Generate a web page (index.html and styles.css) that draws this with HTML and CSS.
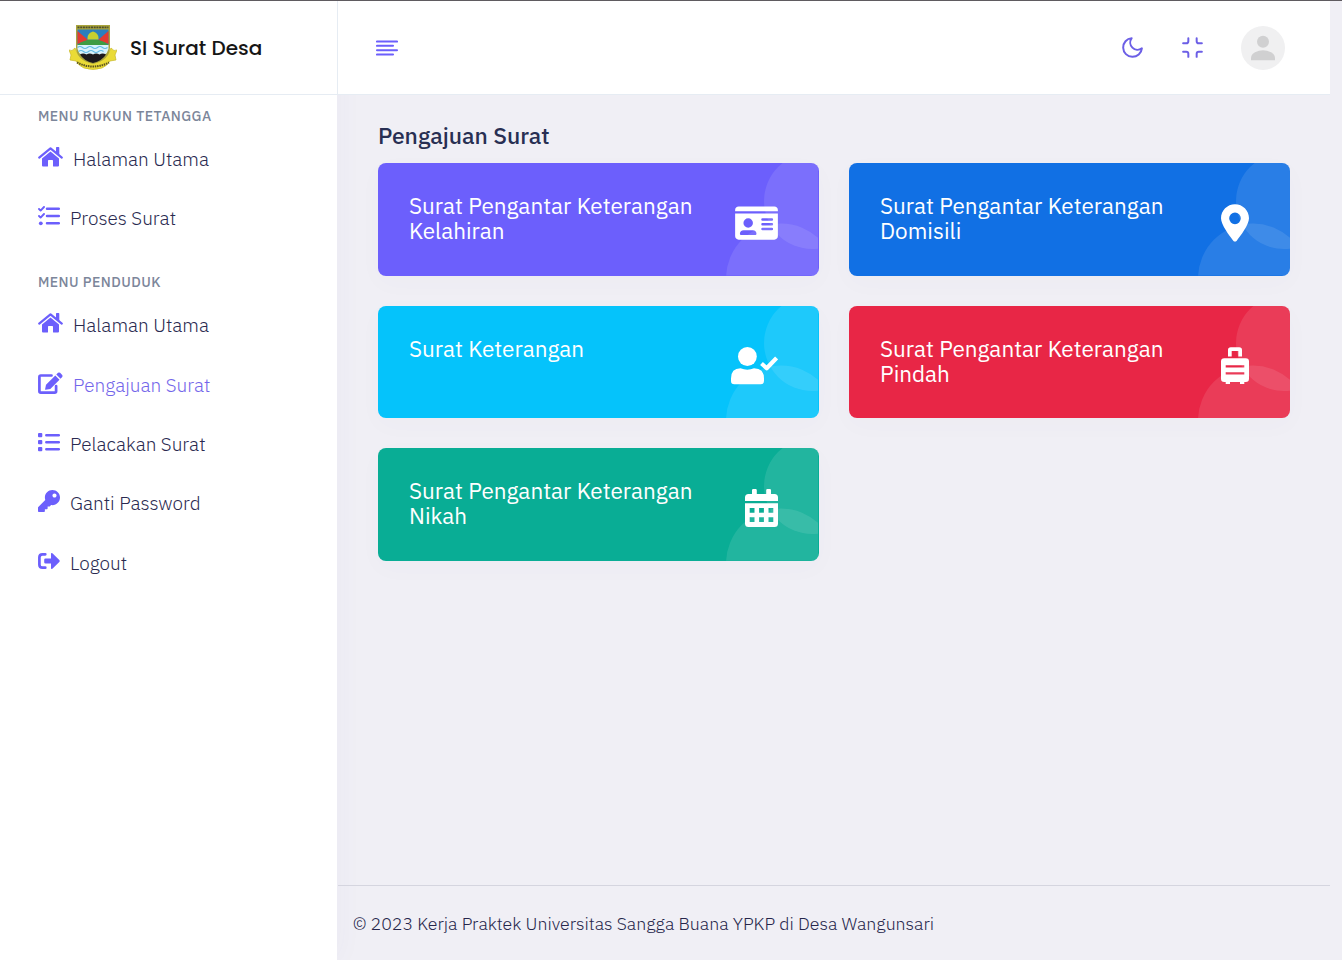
FILE: index.html
```html
<!DOCTYPE html>
<html lang="id">
<head>
<meta charset="utf-8">
<title>SI Surat Desa</title>
<link rel="stylesheet" href="styles.css">
</head>
<body>
<svg class="defs" width="0" height="0">
  <defs>
    <symbol id="house" viewBox="0 0 25 20"><path d="M1.2 10.6 12.5 1.3 23.8 10.6" fill="none" stroke="currentColor" stroke-width="2.2" stroke-linecap="round" stroke-linejoin="round"/><path d="M18 .7q0-.7.7-.7h1.9q.7 0 .7.7V8L18 5.2zM12.5 4.6 21 11.6V18.6q0 1-1 1h-4.300q-.7 0-.7-.7V13.800q0-.7-.7-.7h-3.600q-.7 0-.7.7V18.900q0 .7-.7.7H5q-1 0-1-1V11.600z"/></symbol>
    <symbol id="glow" viewBox="0 0 93 113"><circle cx="86" cy="38" r="48"/><circle cx="55" cy="115.500" r="55"/></symbol>
  </defs>
</svg>
<div class="app">
  <aside class="sidebar">
    <div class="brand">
      <svg class="crest" viewBox="0 0 48 46">
        <path d="M0 25q3 2 6-2l4 8q14 9 28 0l4-8q3 4 6 2l-2 5 1 5-6 1q-3 5-8 7-9 3-18 0-5-2-8-7l-6-1 1-5z" fill="#eadb36" stroke="#c9b92a" stroke-width=".7"/>
        <path d="M7 0H41V22q0 13-17 17Q7 35 7 22z" fill="#a9a43c"/>
        <path d="M8.500 4.500H39.500V20H8.500z" fill="#2c7fbd"/>
        <path d="M8.500 6 19 15 8.500 19zM39.500 6 29 15l10.500 4z" fill="#e23b32"/>
        <path d="M8.500 20q6-5.500 15.500-5.500t15.500 5.500z" fill="#3f9b43"/>
        <path d="M18.500 13q0-5 5.500-6.500 5.500 1.500 5.500 6.500v1.500h-11z" fill="#c8d030"/>
        <path d="M8.500 20h31v4q-1 4-4 6h-23q-3-2-4-6z" fill="#d9f2fb"/>
        <path d="M8.500 22.500q2.500-2 5 0t5 0 5 0 5 0 5 0 5 0M9.500 26.500q2.500-2 5 0t5 0 5 0 5 0 5 0" fill="none" stroke="#62bbe6" stroke-width="1.200"/>
        <path d="M11 29.500q3-2 6.500 0 3-2 6.500 0 3-2 6.500 0 3-2 6.500 0-4 6.500-13 8.500-9-2-13-8.500z" fill="#1d1a1d"/>
        <path d="M8.500 2.400h31" stroke="#4f4f2c" stroke-width="1.800" stroke-dasharray="2 .7"/>
        <path d="M8 37.500q16 8 32 0" fill="none" stroke="#5c5420" stroke-width="2" stroke-dasharray="1.500 .8"/>
      </svg>
      <span class="brand-name">SI Surat Desa</span>
    </div>
    <nav class="menu">
      <h6 class="menu-title first">MENU RUKUN TETANGGA</h6>
      <a class="item"><svg class="ico w25"><use href="#house"/></svg><span>Halaman Utama</span></a>
      <a class="item"><svg class="ico w22" viewBox="0 0 22 20"><path d="M9 2.800H20.800M9 10H20.800M9 17.300H20.800" fill="none" stroke="currentColor" stroke-width="2.500" stroke-linecap="round"/><path d="M1 3 2.600 4.600 6 1M1 10 2.600 11.600 6 8" fill="none" stroke="currentColor" stroke-width="1.900" stroke-linecap="round" stroke-linejoin="round"/><circle cx="2.800" cy="17.300" r="1.900"/></svg><span>Proses Surat</span></a>
      <h6 class="menu-title">MENU PENDUDUK</h6>
      <a class="item"><svg class="ico w25"><use href="#house"/></svg><span>Halaman Utama</span></a>
      <a class="item active"><svg class="ico w25 tall" viewBox="0 0 25 22"><path d="M13.500 3.500H2.800Q1.400 3.500 1.400 4.900V19.200Q1.400 20.600 2.800 20.600H16.700Q18.100 20.600 18.100 19.200V14" fill="none" stroke="currentColor" stroke-width="2.700" stroke-linecap="round"/><path d="M17.300 3.500 21.500 7.700 12.300 16.900 7.500 17.800Q7 17.800 7.100 17.300L8 12.800zM18.300 2.500 20 .8Q21 0 22.100.8L24.200 2.900Q25 4 24.200 5L22.500 6.700z"/></svg><span>Pengajuan Surat</span></a>
      <a class="item"><svg class="ico w22" viewBox="0 0 22 20"><path d="M8.300 3.200H20.800M8.300 10.200H20.800M8.300 17.200H20.800" fill="none" stroke="currentColor" stroke-width="2.500" stroke-linecap="round"/><rect y="1" width="4.300" height="4.300" rx="1"/><rect y="8" width="4.300" height="4.300" rx="1"/><rect y="15" width="4.300" height="4.300" rx="1"/></svg><span>Pelacakan Surat</span></a>
      <a class="item"><svg class="ico w22 key" viewBox="0 0 512 512"><path fill-rule="evenodd" d="M512 176.001C512 273.203 433.202 352 336 352c-11.220 0-22.190-1.062-32.827-3.069l-24.012 27.014A23.999 23.999 0 0 1 261.223 384H224v40c0 13.255-10.745 24-24 24h-40v40c0 13.255-10.745 24-24 24H24c-13.255 0-24-10.745-24-24v-78.059c0-6.365 2.529-12.470 7.029-16.971l161.802-161.802C163.108 213.814 160 195.271 160 176 160 78.798 238.797.001 335.999 0 433.488-.001 512 78.511 512 176.001zM336 128c0 26.510 21.490 48 48 48s48-21.490 48-48-21.490-48-48-48-48 21.490-48 48z"/></svg><span>Ganti Password</span></a>
      <a class="item"><svg class="ico w22" viewBox="0 0 22 20"><path d="M7.300 3.300H4.500Q1.400 3.300 1.400 6.200v7.600q0 2.900 3.100 2.900H7.300" fill="none" stroke="currentColor" stroke-width="2.700" stroke-linecap="round"/><path d="M7.500 7.400H13V3q0-1.700 1.400-.7l6.900 6.700q.8 1 0 2L14.400 17.700Q13 18.700 13 17v-4.400H7.500Q6.200 12.600 6.200 11.300V8.700Q6.200 7.400 7.500 7.400z"/></svg><span>Logout</span></a>
    </nav>
  </aside>
  <div class="main">
    <header class="topbar">
      <svg class="burger" viewBox="0 0 22 16"><path d="M1 1.500H21M1 5.800H17M1 10.200H21M1 14.500H17"/></svg>
      <div class="tools">
        <svg class="tool" viewBox="0 0 24 24"><path d="M21 12.790A9 9 0 1 1 11.210 3 7 7 0 0 0 21 12.790z"/></svg>
        <svg class="tool" viewBox="0 0 24 24"><path d="M8 3v3a2 2 0 0 1-2 2H3m18 0h-3a2 2 0 0 1-2-2V3m0 18v-3a2 2 0 0 1 2-2h3M3 16h3a2 2 0 0 1 2 2v3"/></svg>
        <svg class="avatar" viewBox="0 0 44 44"><circle cx="22" cy="22" r="22" fill="#f0f0f1"/><circle cx="22" cy="15.800" r="6" fill="#d0d0d1"/><path d="M10 34.300V32q0-3.500 4-5.800 8-4 16 0 4 2.300 4 5.800v2.300z" fill="#d0d0d1"/></svg>
      </div>
    </header>
    <main class="content">
      <h4 class="page-title">Pengajuan Surat</h4>
      <div class="cards">
        <a class="card purple"><svg class="glow"><use href="#glow"/></svg><h3>Surat Pengantar Keterangan<br>Kelahiran</h3>
          <svg class="card-ico" width="43" height="38" viewBox="0 0 576 512"><path fill-rule="evenodd" d="M0 80c0-30 20-48 48-48H528c28 0 48 18 48 48v16H0zM0 128H576V432c0 28-20 48-48 48H48c-28 0-48-20-48-48zM64 405q0 11 11 11H277q11 0 11-11 0-53-53-53H117q-53 0-53 53zM176 192a64 64 0 1 0 0 128 64 64 0 1 0 0-128zM368 192a16 16 0 0 0 0 32H496a16 16 0 0 0 0-32zM368 256a16 16 0 0 0 0 32H496a16 16 0 0 0 0-32zM368 320a16 16 0 0 0 0 32H496a16 16 0 0 0 0-32z"/></svg></a>
        <a class="card blue"><svg class="glow"><use href="#glow"/></svg><h3>Surat Pengantar Keterangan<br>Domisili</h3>
          <svg class="card-ico" width="28" height="38" viewBox="0 0 384 512"><path fill-rule="evenodd" d="M215.700 499.200C267 435 384 279.400 384 192C384 86 298 0 192 0S0 86 0 192c0 87.400 117 243 168.300 307.200c12.300 15.300 35.100 15.300 47.400 0zM192 112a80 80 0 1 1 0 160 80 80 0 1 1 0-160z"/></svg></a>
        <a class="card cyan"><svg class="glow"><use href="#glow"/></svg><h3>Surat Keterangan</h3>
          <svg class="card-ico" width="47" height="38" viewBox="0 0 47 38"><circle cx="16.400" cy="9.500" r="9.400"/><path d="M9.500 21.300Q16.400 24 23 21.300 33 21.300 33 31.500V34Q33 37.300 29.700 37.300H3.300Q0 37.300 0 34V31.500Q0 21.300 9.500 21.300z"/><path d="M30.500 16.500 35.700 21.200 45.600 11" fill="none" stroke="#fff" stroke-width="4.200" stroke-linejoin="round"/></svg></a>
        <a class="card red"><svg class="glow"><use href="#glow"/></svg><h3>Surat Pengantar Keterangan<br>Pindah</h3>
          <svg class="card-ico" width="28" height="38" viewBox="0 0 28 38"><path fill-rule="evenodd" d="M7 9.500V3q0-2.800 2.800-2.800h8.400Q21 .2 21 3V9.500H17.300V4H10.700V9.500zM3.300 11.300H24.700Q28 11.300 28 14.600V31.700Q28 35 24.700 35H23.300V37H19V35H9V37H4.700V35H3.300Q0 35 0 31.700V14.600Q0 11.300 3.300 11.300zM4.700 18.300V20.600H23.300V18.300zM4.700 25.300V27.600H23.300V25.300z"/></svg></a>
        <a class="card green"><svg class="glow"><use href="#glow"/></svg><h3>Surat Pengantar Keterangan<br>Nikah</h3>
          <svg class="card-ico" width="33" height="38" viewBox="0 0 33 38"><path fill-rule="evenodd" d="M7 5V1.200Q7 0 8.200 0h2.400q1.200 0 1.200 1.200V5H21.200V1.200Q21.200 0 22.400 0h2.400Q26 0 26 1.200V5h3.500Q33 5 33 8.500V12H0V8.500Q0 5 3.500 5zM0 14.200H33V34.500Q33 38 29.500 38H3.500Q0 38 0 34.500zM4.700 19v4.800h4.800V19zM14.100 19v4.800h4.800V19zM23.500 19v4.800h4.800V19zM4.700 28.300v4.800h4.800v-4.800zM14.100 28.300v4.800h4.800v-4.800zM23.500 28.300v4.800h4.800v-4.800z"/></svg></a>
      </div>
    </main>
    <footer class="footer"><span>© 2023 Kerja Praktek Universitas Sangga Buana YPKP di Desa Wangunsari</span></footer>
  </div>
</div>
</body>
</html>
```
FILE: styles.css
```css
* { box-sizing: border-box; }
body {
  margin: 0;
  background: #f0eff5;
  color: #26264b;
  font-family: "IBM Plex Sans", Roboto, sans-serif;
}
.defs { display: block; }
.app {
  display: flex;
  height: 960px;
  border-top: 1px solid #5f5b60;
  overflow: hidden;
}
.sidebar {
  width: 337px;
  flex: none;
  background: #fff;
  box-shadow: 0 0 28px rgba(82, 85, 170, .04);
}
.brand {
  height: 94px;
  display: flex;
  align-items: center;
  gap: 13px;
  padding-left: 69px;
  border-bottom: 1px solid #e6ecf3;
}
.crest { width: 48px; height: 46px; }
.brand-name {
  font: 500 20px/30px Poppins, Inter, sans-serif;
  color: #161616;
  white-space: nowrap;
}
.menu { padding-left: 38px; display: flex; flex-direction: column; }
.menu-title {
  margin: 14.500px 0 13px;
  font-size: 14px;
  line-height: 20px;
  font-weight: 500;
  letter-spacing: .45px;
  color: #7c869a;
}
.menu-title.first { margin-top: 11px; }
.item {
  height: 59.400px;
  display: flex;
  align-items: flex-start;
  gap: 10px;
  font-size: 19px;
  line-height: 40px;
  font-weight: 300;
  color: #2a2a50;
  white-space: nowrap;
}
.item.active { color: #7366ea; }
.ico {
  height: 20px;
  flex: none;
  margin-top: 8px;
  fill: currentColor;
  color: #6c5ffc;
}
.ico.tall, .ico.key { height: 22px; margin-top: 7px; }
.w25 { width: 25px; }
.w22 { width: 22px; }
.main { flex: 1; display: flex; flex-direction: column; min-width: 0; }
.topbar {
  height: 94px;
  width: 993px;
  flex: none;
  display: flex;
  align-items: center;
  justify-content: space-between;
  padding: 0 45px 0 38px;
  background: #fff;
  border-left: 1px solid #e6ecf3;
  border-bottom: 1px solid #e6ecf3;
}
.burger { width: 22px; height: 16px; fill: none; stroke: #6c5ffc; stroke-width: 2.100; stroke-linecap: round; }
.tools { display: flex; align-items: center; gap: 35px; }
.tool { width: 25px; height: 25px; fill: none; stroke: #6c5fe6; stroke-width: 1.900; stroke-linecap: round; stroke-linejoin: round; }
.avatar { width: 44px; height: 44px; margin-left: 1px; }
.content { flex: 1; padding: 26px 52px 0 41px; }
.page-title {
  margin: 0 0 12px;
  font-size: 22.900px;
  line-height: 30px;
  font-weight: 500;
  color: #282f53;
}
.cards { display: grid; grid-template-columns: 441px 441px; grid-auto-rows: 112.600px; gap: 30px; }
.card {
  position: relative;
  display: flex;
  align-items: flex-start;
  justify-content: space-between;
  padding: 30px 41px 0 31px;
  border-radius: 8px;
  overflow: hidden;
  color: #fff;
  box-shadow: 0 7px 26px rgba(70, 72, 130, .025);
}
.card h3 { margin: 0; font-size: 22.500px; line-height: 25px; font-weight: 400; white-space: nowrap; }
.glow {
  position: absolute;
  right: 0;
  bottom: 0;
  width: 93px;
  height: 113px;
  fill: rgba(255, 255, 255, .1);
  clip-path: inset(0 1px 0 0);
}
.blue .glow, .red .glow { right: -1px; }
.card-ico { position: relative; flex: none; margin-top: 11px; fill: #fff; }
.purple { background: #6c5ffc; }
.blue { background: #1170e4; }
.cyan { background: #05c3fb; }
.red { background: #e82646; }
.green { background: #09ad95; }
.footer {
  height: 75px;
  width: 992px;
  margin-left: 1px;
  padding-left: 15px;
  border-top: 1px solid #d5d5df;
  font-size: 17.750px;
  line-height: 76px;
  font-weight: 300;
  white-space: nowrap;
}
```
